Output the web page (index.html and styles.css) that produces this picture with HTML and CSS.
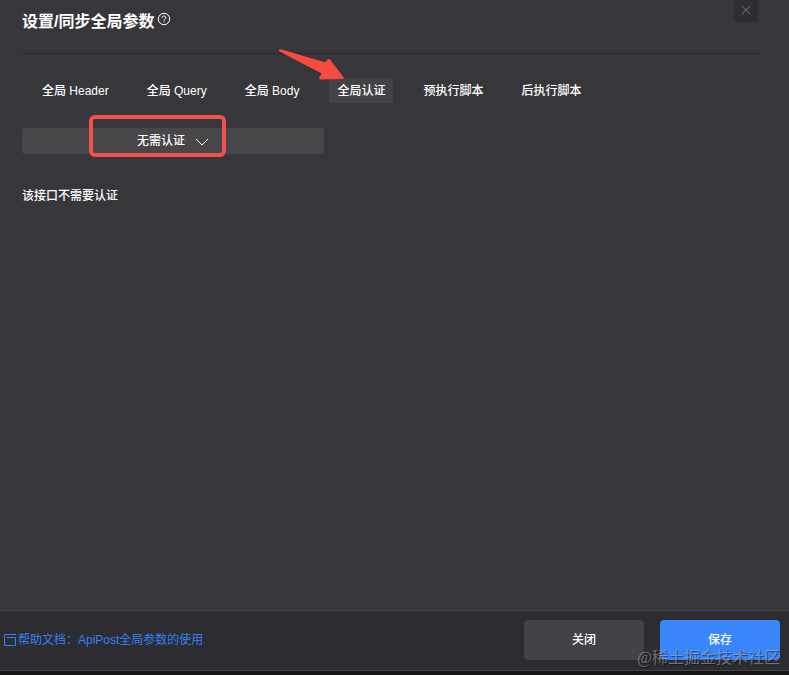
FILE: index.html
```html
<!DOCTYPE html>
<html lang="zh-CN">
<head>
    <meta charset="UTF-8">
    <meta name="viewport" content="width=device-width, initial-scale=1.0">
    <title>设置/同步全局参数</title>
    <link rel="stylesheet" href="styles.css">
</head>
<body>
    <div class="dialog">
        <header class="header">
            <h1>设置/同步全局参数</h1>
            <svg class="help-icon" viewBox="0 0 14 14" width="14" height="14" fill="none" stroke="currentColor">
                <circle cx="7" cy="7" r="5.7"/>
                <path d="M5.2 5.8a1.8 1.8 0 1 1 2.7 1.5c-.6.4-.9.6-.9 1.2M7 9.5v1"/>
            </svg>
            <button class="close-btn" type="button" aria-label="关闭窗口">
                <svg viewBox="0 0 10 10" width="10" height="10" fill="none" stroke="currentColor" stroke-width="1.4">
                    <path d="M1 1l8 8M9 1L1 9"/>
                </svg>
            </button>
        </header>

        <main class="content">
            <nav class="tabs">
                <button class="tab" type="button">全局 Header</button>
                <button class="tab" type="button">全局 Query</button>
                <button class="tab" type="button">全局 Body</button>
                <button class="tab active" type="button">全局认证
                    <svg class="arrow" viewBox="0 0 66 32" width="66" height="32">
                        <path d="M2 1L47 14.2 50 11.3Q51 10.6 52 11.6L65.8 29.6Q66 31 64.8 31L42 31.4Q40.6 31 41.2 29.6L43.6 25.4 1.2 3.2Q.4 1.4 2 1z" fill="#f94a40"/>
                    </svg>
                </button>
                <button class="tab" type="button">预执行脚本</button>
                <button class="tab" type="button">后执行脚本</button>
            </nav>

            <div class="auth-select">
                <select aria-label="认证方式">
                    <option>无需认证</option>
                </select>
                <svg class="chevron" viewBox="0 0 14 8" width="14" height="8" fill="none" stroke="currentColor">
                    <path d="M1 1l6 6 6-6"/>
                </svg>
                <div class="highlight"></div>
            </div>

            <p class="auth-note">该接口不需要认证</p>
        </main>

        <footer class="footer">
            <a class="help-link" href="#">
                <svg viewBox="0 0 12 12" width="12" height="12" fill="none" stroke="currentColor">
                    <path d="M12 .5H.5v11h11v-8H2.5"/>
                </svg>
                <span>帮助文档：ApiPost全局参数的使用</span>
            </a>
            <div class="actions">
                <button class="btn" type="button">关闭</button>
                <button class="btn primary" type="button">保存</button>
            </div>
            <div class="watermark">@稀土掘金技术社区</div>
        </footer>
    </div>
</body>
</html>
```

FILE: styles.css
```css
* {
    margin: 0;
    padding: 0;
    box-sizing: border-box;
}

body {
    background-color: #161618;
    color: #fff;
    font-family: "Liberation Sans", "Noto Sans CJK SC", sans-serif;
    font-size: 12px;
    font-weight: 500;
    line-height: 18px;
}

button,
select {
    border: none;
    color: inherit;
    font: inherit;
    cursor: pointer;
}

.dialog {
    display: flex;
    flex-direction: column;
    min-height: 100vh;
    border-bottom: 4px solid #161618;
    background-color: #37363b;
}

.header {
    display: flex;
    align-items: flex-start;
    height: 54px;
    margin: 0 28px 0 22px;
    border-bottom: 1px solid #29292c;
}

.header h1 {
    margin-top: 10px;
    font-size: 16px;
    font-weight: 700;
    line-height: 24px;
}

.help-icon {
    margin: 12px 0 0 3px;
}

.close-btn {
    display: flex;
    align-items: center;
    justify-content: center;
    width: 24px;
    height: 22px;
    margin: 0 3px 0 auto;
    padding-bottom: 2px;
    border-radius: 0 0 3px 3px;
    background-color: #2e2d32;
    color: #5b5b60;
}

.content {
    flex: 1;
    padding: 24px 22px;
}

.tabs {
    display: flex;
    gap: 22px;
    padding-left: 12px;
}

.tab {
    position: relative;
    height: 25px;
    padding: 0 8px;
    border-radius: 3px;
    background-color: transparent;
    white-space: nowrap;
}

.tab.active {
    background-color: #434246;
}

/* pointer over the active tab */
.arrow {
    position: absolute;
    right: 49px;
    bottom: 23px;
}

.auth-select {
    position: relative;
    width: 302px;
    margin-top: 25px;
}

.auth-select select {
    display: block;
    width: 100%;
    height: 26px;
    padding-right: 24px;
    border-radius: 3px;
    background-color: #474649;
    text-align: center;
    text-align-last: center;
    appearance: none;
}

.chevron {
    position: absolute;
    top: 10px;
    left: 173px;
    pointer-events: none;
}

.highlight {
    position: absolute;
    top: -13px;
    left: 67px;
    width: 137px;
    height: 42px;
    border: 4px solid #ee534b;
    border-radius: 6px;
    pointer-events: none;
}

.auth-note {
    margin-top: 33px;
}

.footer {
    position: relative;
    display: flex;
    align-items: center;
    justify-content: space-between;
    height: 61px;
    padding: 0 9px 2px 4px;
    border-top: 1px solid #454549;
    border-bottom: 1px solid #454549;
    background-color: #2d2c31;
}

.help-link {
    display: flex;
    align-items: center;
    gap: 2px;
    color: #3281f5;
    font-weight: 400;
    text-decoration: none;
}

.actions {
    display: flex;
    gap: 16px;
}

.btn {
    width: 120px;
    height: 40px;
    border-radius: 4px;
    background-color: #434246;
}

.btn.primary {
    background-color: #3985fb;
}

.watermark {
    position: absolute;
    right: 9px;
    bottom: 0;
    color: rgba(190, 190, 195, 0.5);
    font-family: "Liberation Serif", "Noto Sans CJK SC", sans-serif;
    font-size: 16px;
    font-weight: 400;
    line-height: 24px;
    text-shadow: 1px 1px 1px rgba(0, 0, 0, 0.5);
    pointer-events: none;
}
```
